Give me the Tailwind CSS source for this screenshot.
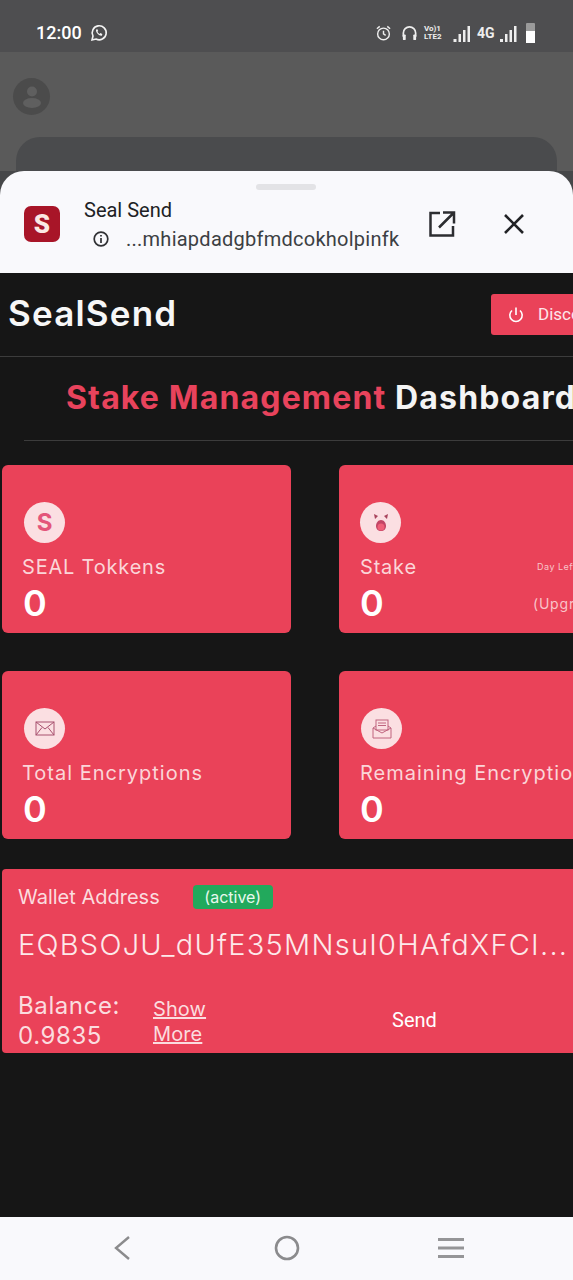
<!DOCTYPE html>
<html lang="en">
<head>
    <meta charset="UTF-8">
    <meta name="viewport" content="width=device-width, initial-scale=1.0">
    <title>Seal Send</title>
    <script src="https://cdn.jsdelivr.net/npm/@tailwindcss/browser@4"></script>
</head>
<body class="bg-[#161616]">
<div class="w-[573px] h-[1280px] overflow-hidden flex flex-col bg-[#464749] font-['Inter',sans-serif]">

    <!-- Status bar -->
    <div class="h-[52px] shrink-0 bg-[#4e4e50] flex items-center justify-between pl-[36px] pr-[38px] pt-[14px] text-white font-['Roboto',sans-serif]">
        <div class="flex items-center gap-[8px]">
            <span class="text-[18px] font-medium leading-none">12:00</span>
            <svg width="18" height="18" viewBox="0 0 18 18" fill="none" stroke="#f4f4f4" stroke-width="1.6"><path d="M2 16l1-4a7 7 0 1 1 3 3z"/><path d="M6.3 5.6c-.8 1 0 3 1.500 4.400s3.200 2.200 4.200 1.400l.3-1.300-1.900-1-.8.800c-1-.5-1.700-1.200-2.200-2.200l.8-.8-1-1.800z" fill="#f4f4f4" stroke="none"/></svg>
        </div>
        <div class="flex items-center">
            <svg width="17" height="18" viewBox="0 0 18 18" fill="none" stroke="#eee" stroke-width="1.500"><circle cx="9" cy="10" r="6.200"/><path d="M9 6.500V10l2.300 1.500M2 4.500L5 2M16 4.500L13 2"/></svg>
            <svg class="ml-[9px]" width="17" height="18" viewBox="0 0 18 18" fill="none" stroke="#eee" stroke-width="1.800"><path d="M2.500 13V9a6.500 6.500 0 0 1 13 0v4"/><rect x="2" y="10.500" width="3" height="6" rx="1" fill="#eee" stroke="none"/><rect x="13" y="10.500" width="3" height="6" rx="1" fill="#eee" stroke="none"/></svg>
            <div class="ml-[6px] w-[19px] flex flex-col text-[8px] font-bold leading-[8px] text-[#eee] whitespace-nowrap"><span>Vo)1</span><span>LTE2</span></div>
            <svg class="ml-[10px]" width="18" height="17" viewBox="0 0 17 17" fill="#eee"><rect x="0" y="14" width="3" height="3"/><rect x="5" y="9" width="2.500" height="8"/><rect x="9.500" y="5" width="2.500" height="12"/><rect x="14" y="1" width="2.500" height="16"/></svg>
            <span class="ml-[6px] w-[16px] text-[14px] font-bold text-[#eee] leading-none">4G</span>
            <svg class="ml-[7px]" width="17" height="17" viewBox="0 0 17 17" fill="#eee"><rect x="0" y="14" width="3" height="3"/><rect x="5" y="9" width="2.500" height="8"/><rect x="9.500" y="5" width="2.500" height="12"/><rect x="14" y="1" width="2.500" height="16"/></svg>
            <div class="ml-[9px] w-[9px] h-[20px] rounded-[1px] bg-[#9a9a9a] flex flex-col justify-end"><div class="h-[12px] bg-white"></div></div>
        </div>
    </div>

    <!-- Dimmed page behind the sheet -->
    <div class="h-[85px] shrink-0 bg-[#5a5a5a] pl-[13px] pt-[26px]">
        <div class="w-[37px] h-[37px] rounded-full bg-[#4b4b4b] flex items-center justify-center">
            <svg width="24" height="26" viewBox="0 0 24 26" fill="#5f5f5f"><circle cx="12" cy="7.500" r="5"/><ellipse cx="12" cy="19" rx="9" ry="5"/></svg>
        </div>
    </div>
    <div class="h-[34px] shrink-0 bg-[#5a5a5a]">
        <div class="h-[34px] mx-[16px] rounded-t-[24px] bg-[#4a4b4d]"></div>
    </div>

    <!-- Sheet header -->
    <div class="h-[102px] shrink-0 bg-[#f9f9fc] rounded-t-[24px] relative font-['Roboto',sans-serif]">
        <div class="absolute left-[256px] top-[13px] w-[60px] h-[6px] rounded-full bg-[#e3e3e6]"></div>
        <div class="flex items-center h-full pl-[24px] pt-[4px]">
            <div class="w-[36px] h-[36px] rounded-[7px] bg-[#a81528] flex items-center justify-center text-[#fbe9e4] text-[26px] font-black leading-none">S</div>
            <div class="ml-[24px] w-[330px]">
                <div class="text-[20px] leading-[24px] text-[#202124]">Seal Send</div>
                <div class="flex items-center mt-[5px] pl-[8px]">
                    <svg width="18" height="18" viewBox="0 0 18 18" fill="none" stroke="#303134" stroke-width="1.700"><circle cx="9" cy="9" r="6.800"/><path d="M9 8v5M9 5v1.600"/></svg>
                    <span class="ml-[16px] text-[20px] leading-[24px] tracking-[0.25px] text-[#3c4043] whitespace-nowrap">...mhiapdadgbfmdcokholpinfk</span>
                </div>
            </div>
            <svg class="ml-[14px]" width="28" height="28" viewBox="0 0 28 28" fill="none" stroke="#2c2d30" stroke-width="2.500"><path d="M12 3H2.500v22.500H25V16M15 2.500h11v11M25.500 3L11 17.500"/></svg>
            <svg class="ml-[47px]" width="22" height="22" viewBox="0 0 22 22" fill="none" stroke="#222326" stroke-width="2.600"><path d="M2 2l18 18M20 2L2 20"/></svg>
        </div>
    </div>

    <!-- Web content -->
    <div class="h-[944px] shrink-0 bg-[#161616] overflow-hidden">
        <div class="w-[640px]">
            <div class="h-[84px] border-b border-[#3c3c3c] flex items-center pl-[8px]">
                <span class="w-[483px] shrink-0 mb-[2px] text-[35px] font-semibold text-[#f7f7f7] leading-none tracking-[1.2px]">SealSend</span>
                <div class="w-[140px] h-[41px] rounded-[3px] bg-[#ea4259] flex items-center pl-[16px] text-[#fde6e9] font-['Roboto',sans-serif]">
                    <svg width="18" height="18" viewBox="0 0 18 18" fill="none" stroke="#fff" stroke-width="1.600"><path d="M5 4.500a6.200 6.200 0 1 0 8 0M9 1.500V9"/></svg>
                    <span class="ml-[13px] text-[17px]">Disconnect</span>
                </div>
            </div>

            <div class="ml-[24px] h-[84px] border-b border-[#3c3c3c] pl-[42px] pb-[2px] flex items-center">
                <h1 class="text-[32px] font-bold leading-none tracking-[1.15px] whitespace-nowrap"><span class="text-[#e8435c]">Stake Management</span> <span class="text-[#f4f4f4]">Dashboard</span></h1>
            </div>

            <div class="grid grid-cols-[289px_289px] gap-x-[48px] gap-y-[38px] pl-[2px] pt-[24px]">
                <div class="h-[168px] rounded-[6px] bg-[#ea4259] pt-[37px] pl-[22px]">
                    <div class="w-[41px] h-[41px] rounded-full bg-[#fbdfe2] flex items-center justify-center text-[#e4557a] text-[24px] font-bold leading-none">S</div>
                    <div class="mt-[11px] -ml-[2px] text-[20px] leading-[26px] tracking-[0.8px] text-[#fbd5d8] whitespace-nowrap">SEAL Tokkens</div>
                    <div class="mt-[3px] -ml-[1px] text-[36px] font-semibold leading-[40px] text-white">0</div>
                </div>
                <div class="h-[168px] rounded-[6px] bg-[#ea4259] pt-[37px] pl-[21px]">
                    <div class="w-[41px] h-[41px] rounded-full bg-[#fbdfe2] flex items-center justify-center">
                        <svg width="20" height="24" viewBox="0 0 20 24"><path d="M3 3l4 2-3 3zM17 3l-4 2 3 3z" fill="#a8445c"/><path d="M10 9c3 0 5 3 5 6s-2 5-5 5-5-2-5-5 2-6 5-6z" fill="#c24565"/><circle cx="10" cy="16" r="3.500" fill="#ef5f78"/></svg>
                    </div>
                    <div class="flex mt-[11px] h-[26px] items-center">
                        <span class="w-[177px] shrink-0 text-[20px] tracking-[0.8px] text-[#fbd5d8]">Stake</span>
                        <span class="text-[9px] tracking-[0.5px] text-[#f9c4c9] whitespace-nowrap">Day Left</span>
                    </div>
                    <div class="flex mt-[3px] h-[40px] items-center">
                        <span class="w-[173px] shrink-0 text-[36px] font-semibold leading-[40px] text-white">0</span>
                        <span class="text-[14px] tracking-[0.8px] text-[#f9c4c9] whitespace-nowrap">(Upgrade)</span>
                    </div>
                </div>
                <div class="h-[168px] rounded-[6px] bg-[#ea4259] pt-[37px] pl-[22px]">
                    <div class="w-[41px] h-[41px] rounded-full bg-[#fbdfe2] flex items-center justify-center">
                        <svg width="20" height="15" viewBox="0 0 20 15" fill="none" stroke="#a8506e" stroke-width="1"><rect x="1" y="1" width="18" height="13"/><path d="M1 1l9 7 9-7M1 14l6-7.500M19 14l-6-7.500"/></svg>
                    </div>
                    <div class="mt-[11px] -ml-[2px] text-[20px] leading-[26px] tracking-[1px] text-[#fbd5d8] whitespace-nowrap">Total Encryptions</div>
                    <div class="mt-[3px] -ml-[1px] text-[36px] font-semibold leading-[40px] text-white">0</div>
                </div>
                <div class="h-[168px] rounded-[6px] bg-[#ea4259] pt-[37px] pl-[22px]">
                    <div class="w-[41px] h-[41px] rounded-full bg-[#fbdfe2] flex items-center justify-center">
                        <svg width="20" height="20" viewBox="0 0 20 20" fill="none" stroke="#c0647f" stroke-width="1"><path d="M1 9v10h18V9l-3-2M1 9l3-2M1 9l9 5 9-5"/><rect x="4" y="1" width="12" height="10"/><path d="M6 4h8M6 6.500h8"/></svg>
                    </div>
                    <div class="mt-[11px] -ml-[1px] text-[20px] leading-[26px] tracking-[1px] text-[#fbd5d8] whitespace-nowrap">Remaining Encryptions</div>
                    <div class="mt-[3px] -ml-[1px] text-[36px] font-semibold leading-[40px] text-white">0</div>
                </div>
            </div>

            <!-- Wallet -->
            <div class="ml-[2px] mt-[30px] w-[630px] h-[184px] rounded-[4px] bg-[#ea4259] pl-[16px] pt-[14px]">
                <div class="flex items-center h-[28px]">
                    <span class="text-[20px] text-[#fbdcdf]">Wallet Address</span>
                    <span class="ml-[33px] w-[80px] h-[24px] rounded-[4px] bg-[#22a95c] flex items-center justify-center text-[16px] text-[#e8f8ee] leading-none">(active)</span>
                </div>
                <div class="mt-[16px] text-[29px] font-light leading-[36px] tracking-[1.25px] text-[#fde9ea] whitespace-nowrap">EQBSOJU_dUfE35MNsuI0HAfdXFCI...</div>
                <div class="flex mt-[28px]">
                    <div class="w-[135px] shrink-0 text-[24px] leading-[30px] tracking-[0.6px] text-[#fbdcdf]">Balance:<br>0.9835</div>
                    <div class="w-[60px] shrink-0 mt-[6px] text-[20px] leading-[25px] tracking-[0.1px] text-[#fbdcdf] underline">Show More</div>
                    <div class="ml-[179px] mt-[15px] text-[20px] leading-[28px] text-white font-['Roboto',sans-serif]">Send</div>
                </div>
            </div>
        </div>
    </div>

    <!-- Nav bar -->
    <div class="h-[63px] shrink-0 bg-[#f9f9fc] flex items-center pb-[2px]">
        <svg class="ml-[113px]" width="18" height="26" viewBox="0 0 18 26" fill="none" stroke="#8b8b8d" stroke-width="2.400"><path d="M16 2L3 13l13 11"/></svg>
        <svg class="ml-[143px]" width="26" height="26" viewBox="0 0 26 26" fill="none" stroke="#8b8b8d" stroke-width="2.600"><circle cx="13" cy="13" r="11"/></svg>
        <svg class="ml-[138px]" width="26" height="22" viewBox="0 0 26 22" fill="#959597"><rect y="1" width="26" height="3"/><rect y="9.500" width="26" height="3"/><rect y="18" width="26" height="3"/></svg>
    </div>
</div>
</body>
</html>
